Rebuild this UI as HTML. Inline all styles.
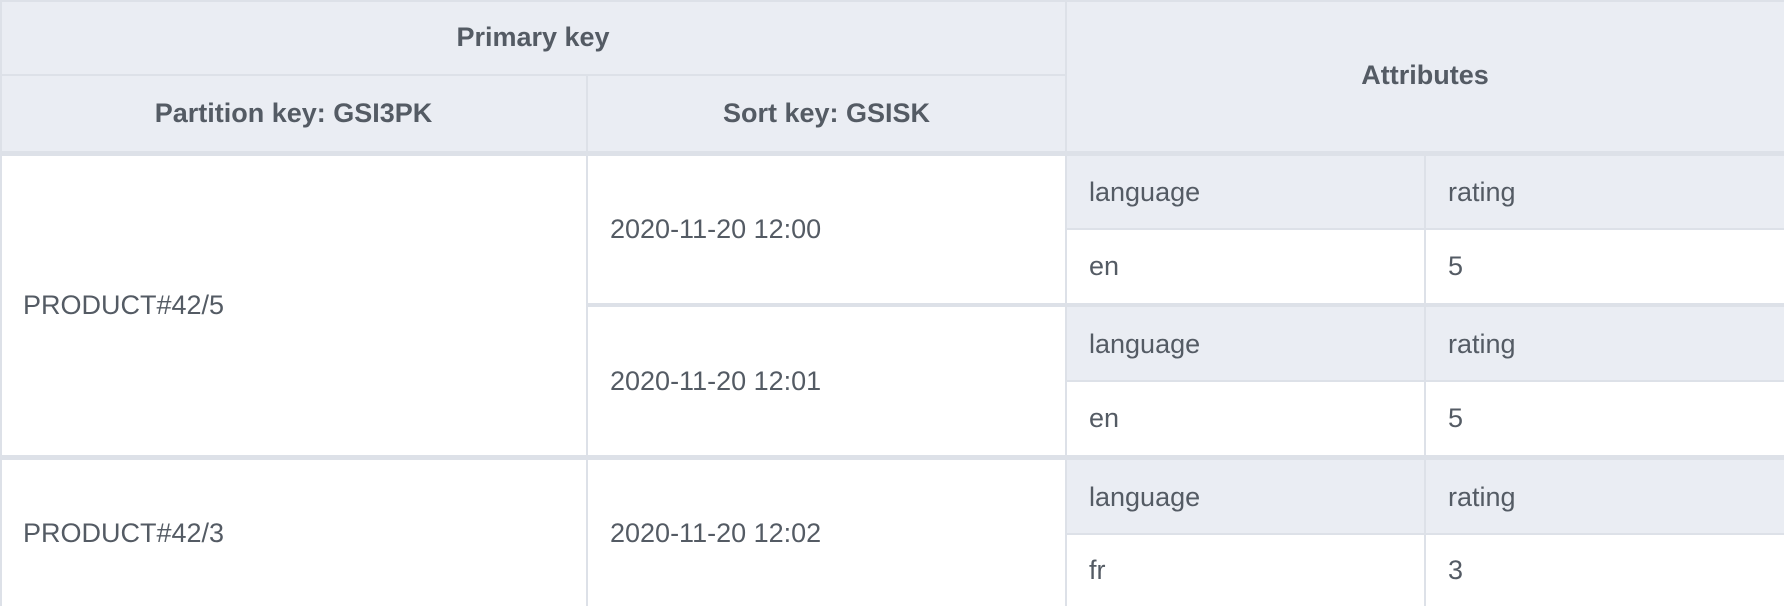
<!DOCTYPE html>
<html><head><style>
body{margin:0;width:1784px;height:606px;overflow:hidden;background:#fff;font-family:"Liberation Sans",sans-serif;color:#545b64}
.c{position:absolute;box-sizing:border-box;display:flex;align-items:center;font-size:27px;letter-spacing:0}
.h{background:#eaedf3;font-weight:bold;justify-content:center;font-size:27px;letter-spacing:0}
.a{background:#eaedf3}
.l{padding-left:23px}
.ln{position:absolute;background:#dde1e8}
</style></head><body>
<div class="c h" style="left:0;top:0;width:1066px;height:75px">Primary key</div>
<div class="c h" style="left:1066px;top:0;width:718px;height:151px">Attributes</div>
<div class="c h" style="left:0;top:75px;width:587px;height:76px">Partition key: GSI3PK</div>
<div class="c h" style="left:587px;top:75px;width:479px;height:76px">Sort key: GSISK</div>

<div class="c l" style="left:0;top:156px;width:587px;height:299px">PRODUCT#42/5</div>
<div class="c l" style="left:0;top:460px;width:587px;height:146px">PRODUCT#42/3</div>
<div class="c l" style="left:587px;top:156px;width:479px;height:147px">2020-11-20 12:00</div>
<div class="c l" style="left:587px;top:307px;width:479px;height:148px">2020-11-20 12:01</div>
<div class="c l" style="left:587px;top:460px;width:479px;height:146px">2020-11-20 12:02</div>

<div class="c l a" style="left:1066px;top:156px;width:718px;height:73px">language</div>
<div class="c l a" style="left:1066px;top:307px;width:718px;height:74px">language</div>
<div class="c l a" style="left:1066px;top:460px;width:718px;height:74px">language</div>
<div class="c l a" style="left:1425px;top:156px;width:359px;height:73px">rating</div>
<div class="c l a" style="left:1425px;top:307px;width:359px;height:74px">rating</div>
<div class="c l a" style="left:1425px;top:460px;width:359px;height:74px">rating</div>
<div class="c l" style="left:1066px;top:229px;width:359px;height:74px">en</div>
<div class="c l" style="left:1066px;top:381px;width:359px;height:74px">en</div>
<div class="c l" style="left:1066px;top:534px;width:359px;height:72px">fr</div>
<div class="c l" style="left:1425px;top:229px;width:359px;height:74px">5</div>
<div class="c l" style="left:1425px;top:381px;width:359px;height:74px">5</div>
<div class="c l" style="left:1425px;top:534px;width:359px;height:72px">3</div>

<div class="ln" style="left:0;top:0;width:1784px;height:2px"></div>
<div class="ln" style="left:0;top:74px;width:1066px;height:2px"></div>
<div class="ln" style="left:0;top:151px;width:1784px;height:5px"></div>
<div class="ln" style="left:1066px;top:228px;width:718px;height:2px"></div>
<div class="ln" style="left:587px;top:303px;width:1197px;height:4px"></div>
<div class="ln" style="left:1066px;top:380px;width:718px;height:2px"></div>
<div class="ln" style="left:0;top:455px;width:1784px;height:5px"></div>
<div class="ln" style="left:1066px;top:533px;width:718px;height:2px"></div>
<div class="ln" style="left:0;top:0;width:2px;height:606px"></div>
<div class="ln" style="left:586px;top:75px;width:2px;height:531px"></div>
<div class="ln" style="left:1065px;top:0;width:2px;height:606px"></div>
<div class="ln" style="left:1424px;top:156px;width:2px;height:450px"></div>
</body></html>
